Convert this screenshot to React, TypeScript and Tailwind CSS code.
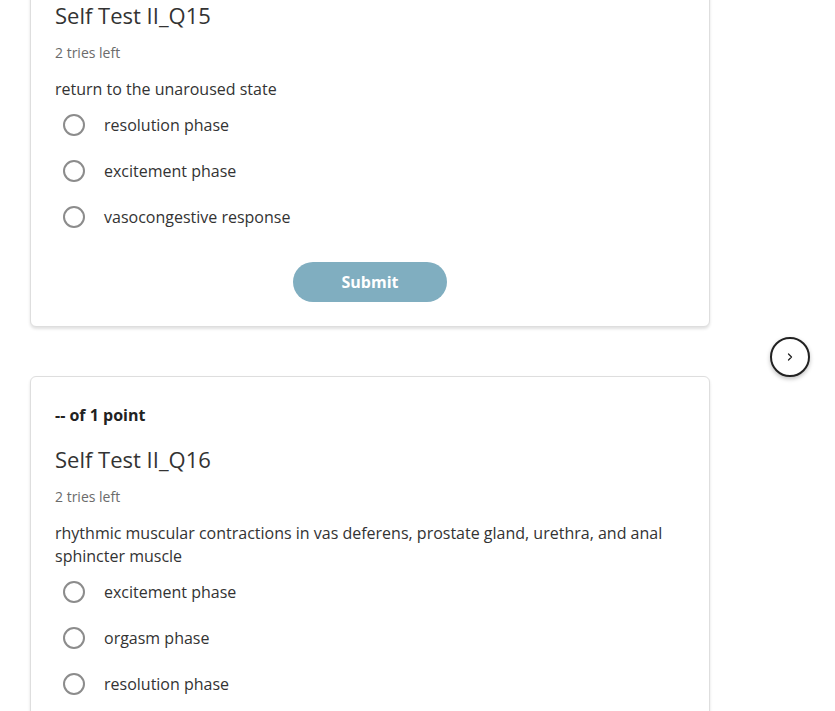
import { ChevronRight } from "lucide-react";

const questions = [
  {
    id: "q15",
    title: "Self Test II_Q15",
    prompt: "return to the unaroused state",
    options: ["resolution phase", "excitement phase", "vasocongestive response"],
  },
  {
    id: "q16",
    title: "Self Test II_Q16",
    prompt:
      "rhythmic muscular contractions in vas deferens, prostate gland, urethra, and anal sphincter muscle",
    options: ["excitement phase", "orgasm phase", "resolution phase"],
  },
];

function QuestionCard({ q }: { q: (typeof questions)[number] }) {
  return (
    <div className="w-[680px] rounded-md border border-[#dedede] bg-white px-6 pt-[26px] pb-6 shadow-[0_2px_3px_rgba(0,0,0,0.12)]">
      <div className="text-base leading-6 font-bold text-[#222]">-- of 1 point</div>
      <h2 className="mt-[17px] text-[22px] leading-[30px] text-[#333]">{q.title}</h2>
      <div className="mt-[13px] text-sm leading-5 text-[#6b6b6b]">2 tries left</div>
      <p className="mt-[15px] text-base leading-[23px] text-[#333]">{q.prompt}</p>
      <div className="mt-px flex flex-col">
        {q.options.map((opt) => (
          <label key={opt} className="flex h-[46px] items-center pl-2">
            <span className="h-[22px] w-[22px] rounded-full border-2 border-[#8c8c8c] bg-white" />
            <span className="ml-[19px] text-base text-[#333]">{opt}</span>
          </label>
        ))}
      </div>
      <div className="mt-[22px] flex justify-center">
        <button className="h-10 w-[154px] rounded-full bg-[#80aec0] text-base font-bold text-white">
          Submit
        </button>
      </div>
    </div>
  );
}

export default function App() {
  return (
    <div
      className="relative h-[711px] overflow-hidden bg-white"
      style={{ fontFamily: '"Open Sans", sans-serif' }}
    >
      <div className="mt-[-68px] ml-[30px] flex flex-col gap-[49px]">
        {questions.map((q) => (
          <QuestionCard key={q.id} q={q} />
        ))}
      </div>
      {/* next question */}
      <button className="absolute top-[337px] left-[770px] flex h-10 w-10 items-center justify-center rounded-full border-2 border-[#222] bg-white shadow-[0_2px_4px_rgba(0,0,0,0.25)]">
        <ChevronRight size={12} strokeWidth={2.5} className="text-[#222]" />
      </button>
    </div>
  );
}
